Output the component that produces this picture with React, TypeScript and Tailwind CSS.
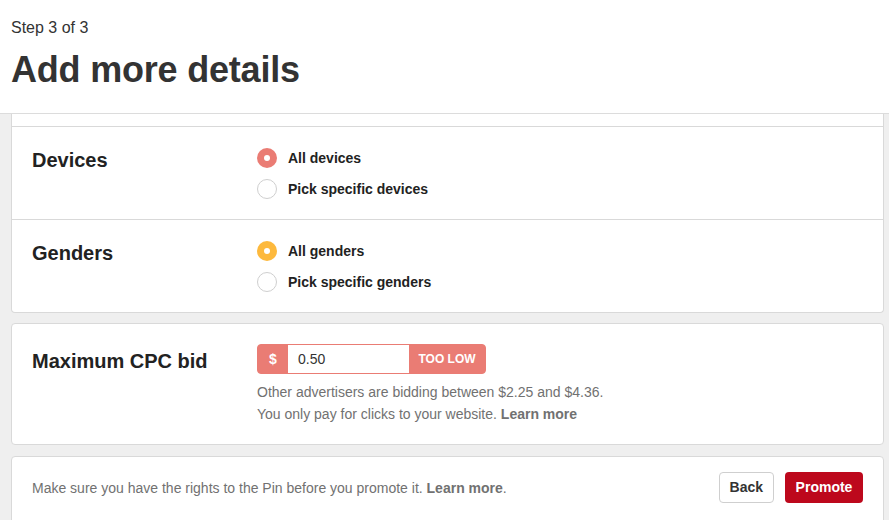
import React from "react";

function Radio({ checked, color, label }: { checked?: boolean; color?: string; label: string }) {
  return (
    <div className="flex items-center h-[20px]">
      {checked ? (
        <span className={`w-[20px] h-[20px] rounded-full flex items-center justify-center ${color}`}>
          <span className="w-[6px] h-[6px] rounded-full bg-white" />
        </span>
      ) : (
        <span className="w-[20px] h-[20px] rounded-full border border-[#cfcfcf] bg-white" />
      )}
      <span className="ml-[11px] text-[14px] font-bold text-[#222]">{label}</span>
    </div>
  );
}

export default function App() {
  return (
    <div
      className="w-[889px] h-[520px] overflow-hidden bg-[#efefef] text-[#333]"
      style={{ fontFamily: '"Liberation Sans", Arial, Helvetica, sans-serif' }}
    >
      <header className="bg-white border-b border-[#dcdcdc] h-[114px] px-[11px] pt-[18px]">
        <div className="text-[16px] leading-[20px] text-[#333]">Step 3 of 3</div>
        <h1 className="mt-[12px] text-[36px] leading-[40px] font-bold text-[#333] tracking-[-0.2px]">
          Add more details
        </h1>
      </header>

      <div className="pl-[11px] pr-[5px] flex flex-col">
        <div className="bg-white border-x border-b border-[#d9d9d9] rounded-b-[4px]">
          <div className="h-[13px] border-b border-[#d9d9d9]" />
          <div className="flex pl-[20px] pt-[21px] pb-[20px] border-b border-[#d9d9d9]">
            <div className="w-[225px] text-[20px] font-bold text-[#222] leading-[24px]">Devices</div>
            <div className="flex flex-col gap-[11px]">
              <Radio checked color="bg-[#ea7c74]" label="All devices" />
              <Radio label="Pick specific devices" />
            </div>
          </div>
          <div className="flex pl-[20px] pt-[21px] pb-[20px]">
            <div className="w-[225px] text-[20px] font-bold text-[#222] leading-[24px]">Genders</div>
            <div className="flex flex-col gap-[11px]">
              <Radio checked color="bg-[#fdb93d]" label="All genders" />
              <Radio label="Pick specific genders" />
            </div>
          </div>
        </div>

        <div className="mt-[10px] bg-white border border-[#d9d9d9] rounded-[4px] flex pl-[20px] pt-[20px] pb-[19px]">
          <div className="w-[225px] text-[20px] font-bold text-[#222] leading-[24px] mt-[5px]">Maximum CPC bid</div>
          <div>
            <div className="flex h-[30px] w-[229px] rounded-[4px] bg-[#ea7c74] border border-[#ea7c74] overflow-hidden">
              <div className="w-[30px] flex items-center justify-center text-white font-bold text-[14px]">$</div>
              <div className="w-[121px] bg-white flex items-center pl-[10px] text-[14px] text-[#333]">0.50</div>
              <div className="flex-1 flex items-center justify-center text-white font-bold text-[12px]">TOO LOW</div>
            </div>
            <div className="mt-[7px] text-[14px] leading-[22px] text-[#717171]">
              <div>Other advertisers are bidding between $2.25 and $4.36.</div>
              <div>
                You only pay for clicks to your website. <span className="font-bold">Learn more</span>
              </div>
            </div>
          </div>
        </div>

        <div className="mt-[11px] bg-white border border-[#d9d9d9] rounded-[4px] flex items-center justify-between pl-[20px] pr-[20px] pt-[15px] pb-[20px]">
          <div className="text-[14px] text-[#717171] mt-[2px]">
            Make sure you have the rights to the Pin before you promote it. <span className="font-bold">Learn more</span>.
          </div>
          <div className="flex gap-[11px]">
            <button className="h-[31px] px-[10px] rounded-[4px] border border-[#cfcfcf] bg-white text-[14px] font-bold text-[#333]">
              Back
            </button>
            <button className="h-[31px] px-[10px] w-[78px] rounded-[4px] bg-[#bd081c] text-[14px] font-bold text-white">
              Promote
            </button>
          </div>
        </div>
      </div>
    </div>
  );
}
